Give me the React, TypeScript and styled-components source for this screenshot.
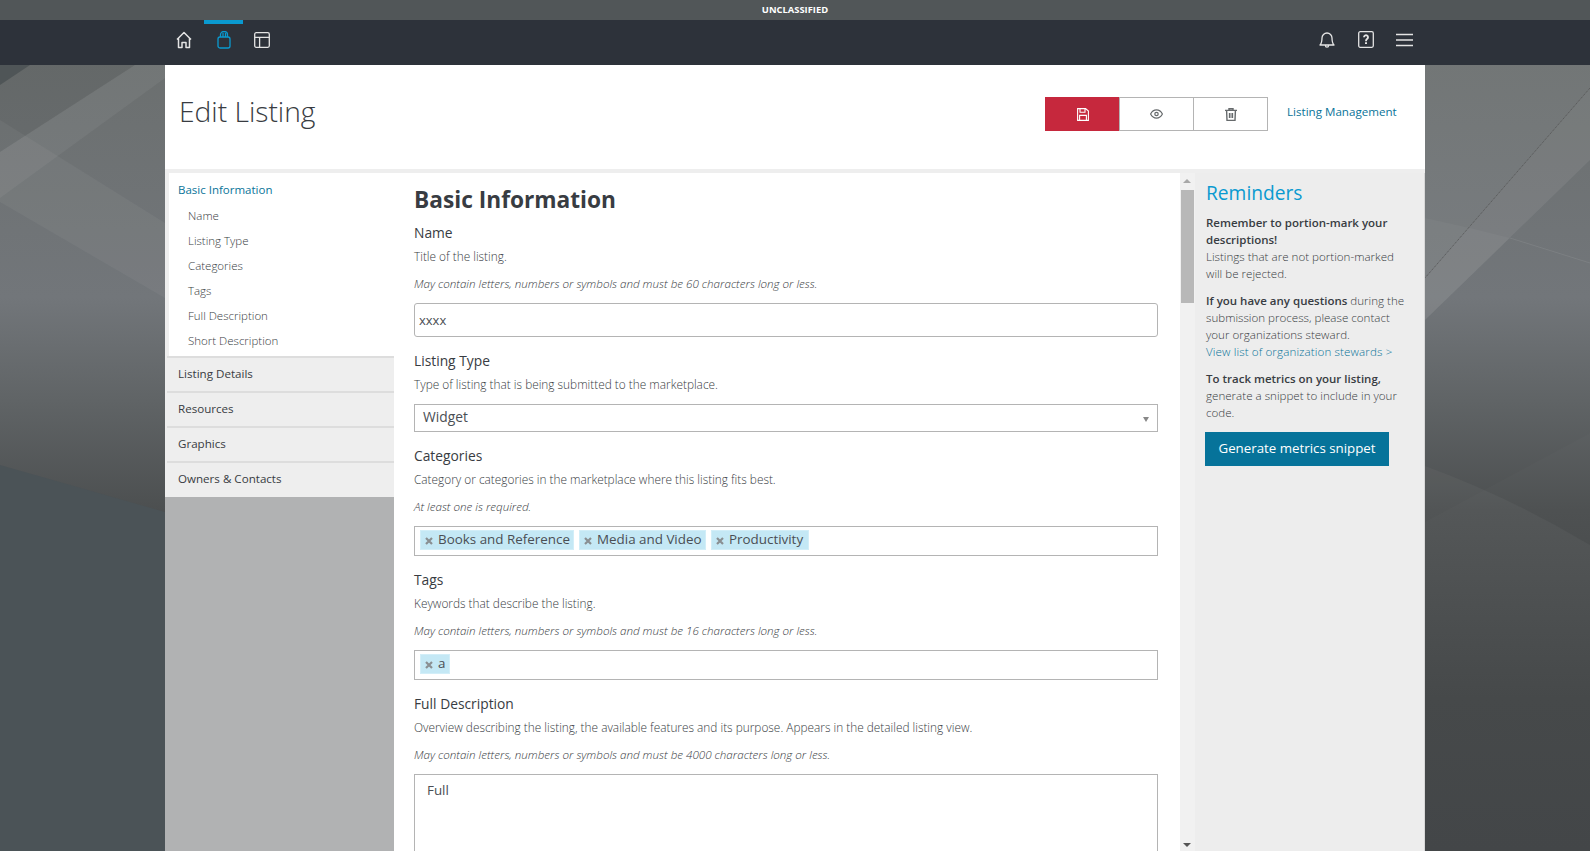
import React from "react";
import styled, { createGlobalStyle } from "styled-components";

const FONT = `"Open Sans", "Noto Sans", "Liberation Sans", sans-serif`;

const Global = createGlobalStyle`
  html, body { margin: 0; padding: 0; height: 100%; overflow: hidden; background: #4c5053; }
  body { font-family: ${FONT}; color: #383c42; }
  * { box-sizing: border-box; }
`;

const Page = styled.div`
  position: relative;
  height: 851px;
  display: flex;
  flex-direction: column;
  overflow: hidden;
`;
const Backdrop = styled.svg`
  position: absolute;
  inset: 0;
  width: 100%;
  height: 100%;
`;
const ClassBar = styled.div`
  position: relative;
  height: 20px;
  flex: none;
  background: #515658;
  color: #fff;
  font-size: 9.4px;
  font-weight: 700;
  line-height: 19px;
  text-align: center;
`;
const NavBar = styled.nav`
  position: relative;
  height: 45px;
  flex: none;
  background: #2d323a;
`;
const NavInner = styled.div`
  width: 1260px;
  height: 100%;
  margin: 0 auto;
  display: flex;
  justify-content: space-between;
`;
const NavGroup = styled.div<{ $end?: boolean }>`
  display: flex;
  margin-right: ${(p) => (p.$end ? "1px" : "0")};
`;
const NavItem = styled.a<{ $active?: boolean; $nudge?: boolean }>`
  width: 39px;
  height: 45px;
  display: flex;
  align-items: center;
  justify-content: center;
  color: ${(p) => (p.$active ? "#0a9ad0" : "#e4e4e4")};
  border-top: 4px solid ${(p) => (p.$active ? "#0a9ad0" : "transparent")};
  padding: 0 ${(p) => (p.$nudge ? "2px" : "0")} 10px 0;
`;
const Shell = styled.div`
  position: relative;
  width: 1260px;
  margin: 0 auto;
  flex: 1;
  min-height: 0;
  display: flex;
  flex-direction: column;
`;
const Header = styled.header`
  height: 104px;
  flex: none;
  background: #fff;
  display: flex;
  align-items: flex-start;
  padding: 32px 0 0 14px;
`;
const Title = styled.h1`
  margin: 0;
  flex: 1;
  font-size: 28.2px;
  font-weight: 300;
  line-height: 28px;
  color: #383c42;
`;
const Actions = styled.div`
  display: flex;
`;
const ActionButton = styled.button<{ $primary?: boolean }>`
  width: 75px;
  height: 34px;
  margin: 0 0 0 -1px;
  padding: 0;
  display: flex;
  align-items: center;
  justify-content: center;
  background: ${(p) => (p.$primary ? "#c6283d" : "#fff")};
  border: 1px solid ${(p) => (p.$primary ? "#c6283d" : "#b4b4b4")};
  color: ${(p) => (p.$primary ? "#fff" : "#666a6c")};
`;
const ManageLink = styled.a`
  margin: 0 29px 0 19px;
  width: 109px;
  font-size: 11.6px;
  line-height: 30px;
  color: #0a7499;
  white-space: nowrap;
`;
const Body = styled.div`
  flex: 1;
  min-height: 0;
  display: flex;
  background: #eee;
  padding-top: 4px;
  overflow: hidden;
`;
const Sidebar = styled.aside`
  width: 229px;
  flex: none;
  margin-top: -4px;
  background: #b1b2b3;
  display: flex;
  flex-direction: column;
`;
const ActiveSection = styled.div`
  border-top: 4px solid #eee;
  border-left: 4px solid #eee;
  background: #fff;
  height: 187px;
  padding: 7px 0 0 9px;
`;
const ActiveHead = styled.div`
  margin-bottom: 3px;
  font-size: 11.5px;
  font-weight: 500;
  line-height: 20px;
  color: #0a7499;
`;
const SubItem = styled.div`
  font-size: 11.5px;
  font-weight: 300;
  height: 25px;
  line-height: 25px;
  padding-left: 10px;
  color: #383c42;
`;
const SectionRow = styled.div`
  height: 35px;
  flex: none;
  background: linear-gradient(#ddd, #ddd) 2px 0 / 100% 2px no-repeat, #eee;
  padding-left: 13px;
  font-size: 11.6px;
  line-height: 35px;
  color: #383c42;
  &:last-child { height: 36px; }
`;
const Content = styled.main`
  width: 786px;
  flex: none;
  background: #fff;
  padding: 12px 22px 0 20px;
  overflow: hidden;
`;
const PageHeading = styled.h2`
  margin: 0 0 8px;
  font-size: 22.7px;
  font-weight: 700;
  line-height: 30px;
  color: #383c42;
`;
const Field = styled.section`
  & + & { margin-top: 14px; }
`;
const Label = styled.div`
  font-size: 13.8px;
  line-height: 20px;
  color: #383c42;
`;
const Help = styled.div`
  margin-top: 4px;
  font-size: 11.85px;
  font-weight: 300;
  line-height: 18px;
  color: #383c42;
`;
const Hint = styled.div`
  margin-top: 10px;
  font-size: 11.6px;
  font-style: italic;
  font-weight: 300;
  line-height: 18px;
  color: #383c42;
`;
const TextInput = styled.div`
  margin-top: 10px;
  height: 34px;
  padding-left: 4px;
  border: 1px solid #b4b4b4;
  border-radius: 3px;
  font-size: 13px;
  line-height: 32px;
  color: #4a4e54;
`;
const SelectBox = styled.div`
  position: relative;
  margin-top: 11px;
  height: 28px;
  padding-left: 8px;
  border: 1px solid #b4b4b4;
  font-size: 13.8px;
  line-height: 24px;
  color: #4a4e54;
  &::after {
    content: "";
    position: absolute;
    right: 8px;
    top: 12px;
    border-left: 3px solid transparent;
    border-right: 3px solid transparent;
    border-top: 5px solid #888;
  }
`;
const ChipBox = styled.div`
  margin-top: 10px;
  height: 30px;
  padding: 3px 5px;
  border: 1px solid #b4b4b4;
  display: flex;
  gap: 5px;
`;
const Chip = styled.span<{ $w: number }>`
  width: ${(p) => p.$w}px;
  height: 20px;
  display: flex;
  align-items: center;
  padding: 0 0 2px 4px;
  background: #c4e8f5;
  border: 1px solid #d2eef8;
  font-size: 13.4px;
  line-height: 18px;
  color: #4a4e54;
  white-space: nowrap;
`;
const ChipX = styled.svg`
  width: 8px;
  height: 8px;
  margin: 4px 5px 0 0;
  flex: none;
`;
const TextArea = styled.div`
  margin-top: 10px;
  height: 200px;
  padding: 5px 12px;
  border: 1px solid #b4b4b4;
  font-size: 13.4px;
  line-height: 20px;
  color: #4a4e54;
`;
const ScrollTrack = styled.div`
  width: 15px;
  flex: none;
  background: #f1f1f1;
  display: flex;
  flex-direction: column;
  align-items: flex-end;
  position: relative;
`;
const Arrow = styled.span<{ $down?: boolean }>`
  position: absolute;
  left: 3px;
  ${(p) => (p.$down ? "bottom: 4px;" : "top: 6px;")}
  border-left: 4px solid transparent;
  border-right: 4px solid transparent;
  ${(p) => (p.$down ? "border-top: 4px solid #555;" : "border-bottom: 4px solid #a8a8a8;")}
`;
const ScrollThumb = styled.div`
  width: 13px;
  height: 113px;
  margin: 17px 1px 0 0;
  background: #b8b8b8;
`;
const Reminders = styled.aside`
  flex: 1;
  background: #ededed;
  padding: 6px 17px 0 11px;
  border-right: 1px solid #d8d8d8;
`;
const RemindersTitle = styled.h3`
  margin: 0 0 7px;
  font-size: 19.2px;
  font-weight: 400;
  line-height: 28px;
  color: #0a9ad0;
`;
const Note = styled.p`
  margin: 0 0 10px;
  font-size: 11.6px;
  font-weight: 300;
  line-height: 17px;
  color: #383c42;
  white-space: normal;
`;
const Strong = styled.strong`
  font-size: 11.5px;
  font-weight: 600;
`;
const NoteLink = styled.a`
  color: #0a7499;
  letter-spacing: 0.12px;
  white-space: nowrap;
`;
const MetricsButton = styled.button`
  display: block;
  width: 184px;
  height: 34px;
  margin: 11px 0 0 -1px;
  padding: 0 0 2px;
  border: 0;
  background: #06739a;
  color: #fff;
  font-family: ${FONT};
  font-size: 13.3px;
`;

const Icon = styled.svg`
  display: block;
  fill: none;
  stroke: currentColor;
`;

const HomeIcon = () => (
  <Icon width="16" height="18" viewBox="0 0 16 18" strokeWidth="1.5">
    <path d="M1 8.5 8 1.5l7 7M2.5 7.5v9h3.5v-5h4v5h3.5v-9" strokeLinejoin="round" />
  </Icon>
);
const BagIcon = () => (
  <Icon width="14" height="18" viewBox="0 0 14 18" strokeWidth="1.3">
    <rect x="1" y="6" width="12" height="11" rx="2" />
    <path d="M3.5 6V3.5a3.5 3 0 0 1 7 0V6M6 6V2M8.5 6V2" />
  </Icon>
);
const LayoutIcon = () => (
  <Icon width="16" height="16" viewBox="0 0 16 16" strokeWidth="1.3">
    <rect x=".7" y=".7" width="14.6" height="14.6" rx="1.5" />
    <path d="M.7 5.3h14.6M5.6 5.3v10" />
  </Icon>
);
const BellIcon = () => (
  <Icon width="16" height="18" viewBox="0 0 16 18" strokeWidth="1.3">
    <path d="M1 14c2-2 2-4 2-7a5 5 0 0 1 10 0c0 3 0 5 2 7zM6.4 14.5a1.6 1.6 0 0 0 3.2 0" strokeLinejoin="round" />
  </Icon>
);
const HelpIcon = () => (
  <Icon width="16" height="17" viewBox="0 0 16 17" strokeWidth="1.3">
    <rect x=".7" y=".7" width="14.6" height="15.6" rx="1.5" />
    <path d="M6 6.2A2 2 0 1 1 9 8C8.2 8.6 8 9 8 10.2" strokeWidth="1.9" />
    <path d="M8 11.2v1.8" strokeWidth="2" />
  </Icon>
);
const MenuIcon = () => (
  <Icon width="17" height="14" viewBox="0 0 17 14" strokeWidth="1.7">
    <path d="M0 1.5h17M0 7h17M0 12.5h17" />
  </Icon>
);
const SaveIcon = () => (
  <Icon width="12" height="13" viewBox="0 0 12 13" strokeWidth="1.1">
    <path d="M.6.6h8L11.4 3v9.4H.6zM3 .8v3.4h5V.8M2.6 12.2V7.4h6.8v4.8" />
  </Icon>
);
const EyeIcon = () => (
  <Icon width="13" height="10" viewBox="0 0 13 10" strokeWidth="1.2">
    <path d="M.6 5C2 2.3 4 .9 6.5.9S11 2.3 12.4 5C11 7.7 9 9.1 6.5 9.1S2 7.7.6 5z" />
    <circle cx="6.5" cy="5" r="1.7" />
  </Icon>
);
const TrashIcon = () => (
  <Icon width="12" height="13" viewBox="0 0 12 13" strokeWidth="1.4">
    <path d="M0 2.4h12M4 2V.7h4V2M1.6 2.6l.4 9.8h8l.4-9.8" />
    <path d="M4.7 5v5M7.3 5v5" strokeWidth="1.7" />
  </Icon>
);
const X = () => (
  <ChipX viewBox="0 0 8 8">
    <path d="M1 1l6 6M7 1 1 7" stroke="#8a8f92" strokeWidth="2.2" fill="none" />
  </ChipX>
);

const Background = () => (
  <Backdrop viewBox="0 0 1590 851" preserveAspectRatio="none">
    <defs>
      <linearGradient id="base" x1="0" y1="0" x2="0" y2="1">
        <stop offset="0.07" stopColor="#6b6f6f" />
        <stop offset="0.35" stopColor="#72767a" />
        <stop offset="0.47" stopColor="#606466" />
        <stop offset="0.6" stopColor="#4c4f50" />
        <stop offset="0.82" stopColor="#3e4142" />
        <stop offset="1" stopColor="#3b3e40" />
      </linearGradient>
    </defs>
    <rect width="1590" height="851" fill="url(#base)" />
    <polygon points="0,465 165,512 165,851 0,851" fill="#4b5357" />
    <polygon points="0,65 135,65 0,152" fill="#000" opacity=".06" />
    <polygon points="0,65 30,65 0,85" fill="#4f5557" />
    <polygon points="0,120 165,223 165,298 0,202" fill="#fff" opacity=".045" />
    <polygon points="0,152 135,65 165,65 165,78 0,198" fill="#fff" opacity=".05" />
    <polygon points="1425,65 1590,65 1590,88 1425,278" fill="#fff" opacity=".05" />
    <polygon points="1590,88 1425,278 1425,320 1590,160" fill="#fff" opacity=".07" />
    <polygon points="1425,218 1470,228 1510,238 1425,320" fill="#fff" opacity=".03" />
    <path d="M1510,238 L1590,263" stroke="#fff" strokeOpacity=".08" fill="none" />
    <line x1="1590" y1="88" x2="1425" y2="278" stroke="#555" strokeWidth="1" strokeDasharray="1 1" />
    <path d="M1425,466 Q1510,497 1590,545 V851 H1425Z" fill="#fff" opacity=".035" />
    <polygon points="1425,522 1590,433 1590,851 1425,851" fill="#fff" opacity=".015" />
  </Backdrop>
);

const subItems = ["Name", "Listing Type", "Categories", "Tags", "Full Description", "Short Description"];
const sections = ["Listing Details", "Resources", "Graphics", "Owners & Contacts"];

export default function App() {
  return (
    <Page>
      <Global />
      <Background />
      <ClassBar>UNCLASSIFIED</ClassBar>
      <NavBar>
        <NavInner>
          <NavGroup>
            <NavItem $nudge><HomeIcon /></NavItem>
            <NavItem $active><BagIcon /></NavItem>
            <NavItem $nudge><LayoutIcon /></NavItem>
          </NavGroup>
          <NavGroup $end>
            <NavItem><BellIcon /></NavItem>
            <NavItem><HelpIcon /></NavItem>
            <NavItem><MenuIcon /></NavItem>
          </NavGroup>
        </NavInner>
      </NavBar>
      <Shell>
        <Header>
          <Title>Edit Listing</Title>
          <Actions>
            <ActionButton $primary><SaveIcon /></ActionButton>
            <ActionButton><EyeIcon /></ActionButton>
            <ActionButton><TrashIcon /></ActionButton>
          </Actions>
          <ManageLink>Listing Management</ManageLink>
        </Header>
        <Body>
          <Sidebar>
            <ActiveSection>
              <ActiveHead>Basic Information</ActiveHead>
              {subItems.map((s) => <SubItem key={s}>{s}</SubItem>)}
            </ActiveSection>
            {sections.map((s) => <SectionRow key={s}>{s}</SectionRow>)}
          </Sidebar>
          <Content>
            <PageHeading>Basic Information</PageHeading>
            <Field>
              <Label>Name</Label>
              <Help>Title of the listing.</Help>
              <Hint>May contain letters, numbers or symbols and must be 60 characters long or less.</Hint>
              <TextInput>xxxx</TextInput>
            </Field>
            <Field>
              <Label>Listing Type</Label>
              <Help>Type of listing that is being submitted to the marketplace.</Help>
              <SelectBox>Widget</SelectBox>
            </Field>
            <Field>
              <Label>Categories</Label>
              <Help>Category or categories in the marketplace where this listing fits best.</Help>
              <Hint>At least one is required.</Hint>
              <ChipBox>
                <Chip $w={154}><X />Books and Reference</Chip>
                <Chip $w={127}><X />Media and Video</Chip>
                <Chip $w={98}><X />Productivity</Chip>
              </ChipBox>
            </Field>
            <Field>
              <Label>Tags</Label>
              <Help>Keywords that describe the listing.</Help>
              <Hint>May contain letters, numbers or symbols and must be 16 characters long or less.</Hint>
              <ChipBox>
                <Chip $w={30}><X />a</Chip>
              </ChipBox>
            </Field>
            <Field>
              <Label>Full Description</Label>
              <Help>Overview describing the listing, the available features and its purpose. Appears in the detailed listing view.</Help>
              <Hint>May contain letters, numbers or symbols and must be 4000 characters long or less.</Hint>
              <TextArea>Full</TextArea>
            </Field>
          </Content>
          <ScrollTrack>
            <Arrow />
            <ScrollThumb />
            <Arrow $down />
          </ScrollTrack>
          <Reminders>
            <RemindersTitle>Reminders</RemindersTitle>
            <Note>
              <Strong>Remember to portion-mark your descriptions!</Strong><br />
              Listings that are not portion-marked will be rejected.
            </Note>
            <Note>
              <Strong>If you have any questions</Strong> during the submission process, please contact your organizations steward.<br />
              <NoteLink>View list of organization stewards &gt;</NoteLink>
            </Note>
            <Note>
              <Strong>To track metrics on your listing,</Strong> generate a snippet to include in your code.
            </Note>
            <MetricsButton>Generate metrics snippet</MetricsButton>
          </Reminders>
        </Body>
      </Shell>
    </Page>
  );
}
